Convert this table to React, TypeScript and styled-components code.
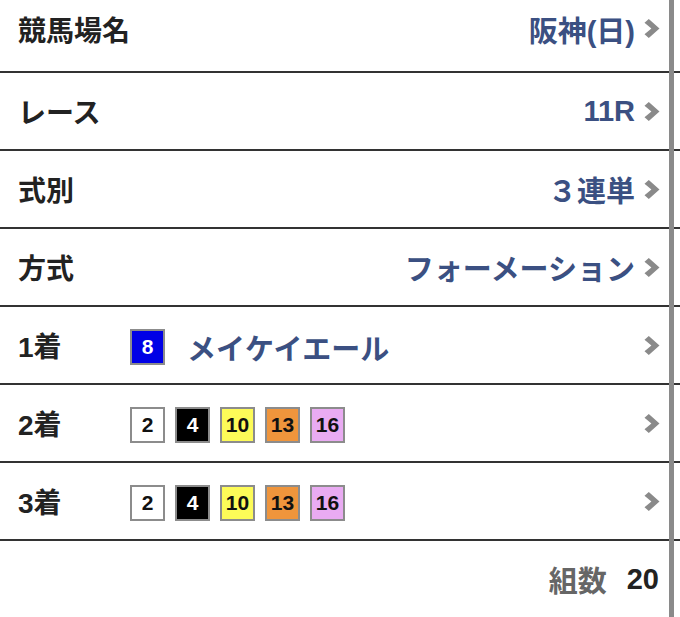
import React from "react";
import styled, { createGlobalStyle } from "styled-components";

const GlobalStyle = createGlobalStyle`
  html, body {
    margin: 0;
    padding: 0;
    background: #ffffff;
  }
  body {
    font-family: "Liberation Sans", "Noto Sans CJK JP", sans-serif;
    overflow: hidden;
  }
`;

type Waku = "white" | "black" | "yellow" | "orange" | "pink" | "blue";

const WAKU_COLORS: Record<Waku, { bg: string; fg: string }> = {
  white: { bg: "#ffffff", fg: "#111111" },
  black: { bg: "#000000", fg: "#ffffff" },
  yellow: { bg: "#fdfb58", fg: "#111111" },
  orange: { bg: "#ef953c", fg: "#111111" },
  pink: { bg: "#e9abf2", fg: "#111111" },
  blue: { bg: "#0000e6", fg: "#ffffff" },
};

const picks: { num: number; waku: Waku }[] = [
  { num: 2, waku: "white" },
  { num: 4, waku: "black" },
  { num: 10, waku: "yellow" },
  { num: 13, waku: "orange" },
  { num: 16, waku: "pink" },
];

// thick disclosure chevron, drawn as a filled outline
const Chevron = () => (
  <ChevronIcon viewBox="0 0 16 19">
    <polygon
      points="0.5,3.8 4.8,0 15.5,9.5 4.8,19 0.5,15.2 7.4,9.5"
      fill="#8a8a8a"
    />
  </ChevronIcon>
);

const HorseBoxes = () => (
  <Boxes>
    {picks.map((p) => (
      <NumBox key={p.num} $waku={p.waku}>
        {p.num}
      </NumBox>
    ))}
  </Boxes>
);

export default function App() {
  return (
    <Root>
      <GlobalStyle />
      <List>
        <Row $first>
          <Label>競馬場名</Label>
          <Value>阪神(日)</Value>
          <Chevron />
        </Row>
        <Row>
          <Label>レース</Label>
          <Value>11R</Value>
          <Chevron />
        </Row>
        <Row>
          <Label>式別</Label>
          <Value>３連単</Value>
          <Chevron />
        </Row>
        <Row>
          <Label>方式</Label>
          <Value>フォーメーション</Value>
          <Chevron />
        </Row>
        <Row>
          <Label $narrow>1着</Label>
          <Boxes>
            <NumBox $waku="blue">8</NumBox>
            <HorseName>メイケイエール</HorseName>
          </Boxes>
          <Chevron />
        </Row>
        <Row>
          <Label $narrow>2着</Label>
          <HorseBoxes />
          <Chevron />
        </Row>
        <Row>
          <Label $narrow>3着</Label>
          <HorseBoxes />
          <Chevron />
        </Row>
        <Footer>
          <CountLabel>組数</CountLabel>
          <CountValue>20</CountValue>
        </Footer>
      </List>
      <ScrollTrack />
    </Root>
  );
}

const Root = styled.div`
  position: relative;
  width: 680px;
  height: 617px;
  overflow: hidden;
  background: #ffffff;
`;

const List = styled.div`
  display: flex;
  flex-direction: column;
`;

const Row = styled.div<{ $first?: boolean }>`
  display: flex;
  align-items: center;
  box-sizing: border-box;
  height: ${({ $first }) => ($first ? "73px" : "78px")};
  padding: 0 20px ${({ $first }) => ($first ? "14px" : "0")} 18px;
  border-bottom: 2px solid #333333;
`;

const Label = styled.div<{ $narrow?: boolean }>`
  flex: ${({ $narrow }) => ($narrow ? "0 0 112px" : "1 1 auto")};
  font-size: 28px;
  font-weight: 700;
  color: #222222;
`;

const Value = styled.div`
  font-size: 29px;
  font-weight: 700;
  color: #3b5082;
  margin-right: 9px;
`;

const ChevronIcon = styled.svg`
  display: block;
  flex: 0 0 16px;
  width: 16px;
  height: 19px;
`;

const Boxes = styled.div`
  flex: 1 1 auto;
  display: flex;
  align-items: center;
  gap: 10px;
  padding-top: 3px;
`;

const NumBox = styled.div<{ $waku: Waku }>`
  width: 35px;
  height: 36px;
  box-sizing: border-box;
  display: flex;
  align-items: center;
  justify-content: center;
  border: 2px solid #8c8c8c;
  background: ${({ $waku }) => WAKU_COLORS[$waku].bg};
  color: ${({ $waku }) => WAKU_COLORS[$waku].fg};
  font-size: 21px;
  font-weight: 700;
`;

const HorseName = styled.div`
  margin-left: 12px;
  font-size: 29px;
  font-weight: 700;
  color: #3b5082;
`;

const Footer = styled.div`
  display: flex;
  align-items: center;
  justify-content: flex-end;
  gap: 20px;
  height: 76px;
  padding: 0 21px 0 18px;
`;

const CountLabel = styled.div`
  font-size: 29px;
  font-weight: 700;
  color: #666666;
`;

const CountValue = styled.div`
  font-size: 29px;
  font-weight: 700;
  color: #222222;
`;

const ScrollTrack = styled.div`
  position: absolute;
  top: 0;
  left: 669px;
  width: 5px;
  height: 100%;
  background: #8a8a8a;
`;
